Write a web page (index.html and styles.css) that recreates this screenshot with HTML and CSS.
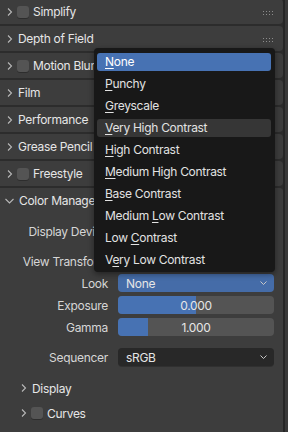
FILE: index.html
```html
<!DOCTYPE html>
<html>
<head>
    <link rel="stylesheet" href="styles.css">
</head>
<body>
    <div class="editor">
        <div class="panels">
            <div class="panel-head first">
                <svg class="chev" width="6" height="8" viewBox="0 0 6 8"><path d="M1 0.5 L4.5 4 L1 7.5" /></svg>
                <span class="check"></span>
                <span class="title">Simplify</span>
                <svg class="grip" width="10" height="4" viewBox="0 0 10 4"><g><rect x="0" y="0" width="1" height="1"/><rect x="3" y="0" width="1" height="1"/><rect x="6" y="0" width="1" height="1"/><rect x="9" y="0" width="1" height="1"/><rect x="0" y="3" width="1" height="1"/><rect x="3" y="3" width="1" height="1"/><rect x="6" y="3" width="1" height="1"/><rect x="9" y="3" width="1" height="1"/></g></svg>
            </div>
            <div class="panel-head">
                <svg class="chev" width="6" height="8" viewBox="0 0 6 8"><path d="M1 0.5 L4.5 4 L1 7.5" /></svg>
                <span class="title">Depth of Field</span>
                <svg class="grip" width="10" height="4" viewBox="0 0 10 4"><g><rect x="0" y="0" width="1" height="1"/><rect x="3" y="0" width="1" height="1"/><rect x="6" y="0" width="1" height="1"/><rect x="9" y="0" width="1" height="1"/><rect x="0" y="3" width="1" height="1"/><rect x="3" y="3" width="1" height="1"/><rect x="6" y="3" width="1" height="1"/><rect x="9" y="3" width="1" height="1"/></g></svg>
            </div>
            <div class="panel-head">
                <svg class="chev" width="6" height="8" viewBox="0 0 6 8"><path d="M1 0.5 L4.5 4 L1 7.5" /></svg>
                <span class="check"></span>
                <span class="title">Motion Blur</span>
            </div>
            <div class="panel-head">
                <svg class="chev" width="6" height="8" viewBox="0 0 6 8"><path d="M1 0.5 L4.5 4 L1 7.5" /></svg>
                <span class="title">Film</span>
            </div>
            <div class="panel-head">
                <svg class="chev" width="6" height="8" viewBox="0 0 6 8"><path d="M1 0.5 L4.5 4 L1 7.5" /></svg>
                <span class="title">Performance</span>
            </div>
            <div class="panel-head">
                <svg class="chev" width="6" height="8" viewBox="0 0 6 8"><path d="M1 0.5 L4.5 4 L1 7.5" /></svg>
                <span class="title">Grease Pencil</span>
            </div>
            <div class="panel-head">
                <svg class="chev" width="6" height="8" viewBox="0 0 6 8"><path d="M1 0.5 L4.5 4 L1 7.5" /></svg>
                <span class="check"></span>
                <span class="title">Freestyle</span>
            </div>

            <div class="panel open">
                <div class="panel-head">
                    <svg class="chev down" width="9" height="6" viewBox="0 0 9 6"><path d="M0.5 1 L4.5 5 L8.5 1" /></svg>
                    <span class="title">Color Management</span>
                </div>
                <div class="panel-body">
                    <div class="prop">
                        <span class="label">Display Device</span>
                        <div class="field menu-field"><span>sRGB</span></div>
                    </div>
                    <div class="prop group">
                        <span class="label">View Transform</span>
                        <div class="field menu-field"><span>AgX</span></div>
                    </div>
                    <div class="prop">
                        <span class="label">Look</span>
                        <div class="field menu-field active">
                            <span>None</span>
                            <svg class="drop" width="7" height="4" viewBox="0 0 7 4"><path d="M0.5 0.5 L3.5 3.5 L6.5 0.5" /></svg>
                        </div>
                    </div>
                    <div class="prop">
                        <span class="label">Exposure</span>
                        <div class="field slider">
                            <div class="fill" style="width: 50%"></div>
                            <span class="value">0.000</span>
                        </div>
                    </div>
                    <div class="prop">
                        <span class="label">Gamma</span>
                        <div class="field slider">
                            <div class="fill" style="width: 19%"></div>
                            <span class="value">1.000</span>
                        </div>
                    </div>
                    <div class="prop group">
                        <span class="label">Sequencer</span>
                        <div class="field menu-field dark">
                            <span>sRGB</span>
                            <svg class="drop" width="7" height="4" viewBox="0 0 7 4"><path d="M0.5 0.5 L3.5 3.5 L6.5 0.5" /></svg>
                        </div>
                    </div>

                    <div class="sub-head first-sub">
                        <svg class="chev" width="6" height="8" viewBox="0 0 6 8"><path d="M1 0.5 L4.5 4 L1 7.5" /></svg>
                        <span class="title">Display</span>
                    </div>
                    <div class="sub-head">
                        <svg class="chev" width="6" height="8" viewBox="0 0 6 8"><path d="M1 0.5 L4.5 4 L1 7.5" /></svg>
                        <span class="check"></span>
                        <span class="title">Curves</span>
                    </div>
                </div>
            </div>
        </div>
        <div class="scrollbar"></div>
    </div>

    <div class="popup">
        <div class="item selected"><u>N</u>one</div>
        <div class="item"><u>P</u>unchy</div>
        <div class="item"><u>G</u>reyscale</div>
        <div class="item hover"><u>V</u>ery High Contrast</div>
        <div class="item"><u>H</u>igh Contrast</div>
        <div class="item"><u>M</u>edium High Contrast</div>
        <div class="item"><u>B</u>ase Contrast</div>
        <div class="item">Medium <u>L</u>ow Contrast</div>
        <div class="item">Low <u>C</u>ontrast</div>
        <div class="item">V<u>e</u>ry Low Contrast</div>
    </div>
</body>
</html>
```

FILE: styles.css
```css
:root {
    --region: #2c2c2c;
    --panel: #3d3d3d;
    --text: #e6e6e6;
    --label: #d6d6d6;
    --icon: #b8b8b8;
    --blue: #4772b3;
    --blue-dim: #456ca8;
    --slider: #545454;
    --menu: #181818;
}

* {
    margin: 0;
    padding: 0;
    box-sizing: border-box;
}

body {
    width: 288px;
    height: 432px;
    overflow: hidden;
    background: var(--region);
    font-family: Inter, "DejaVu Sans", sans-serif;
    font-size: 12px;
    letter-spacing: -0.3px;
    color: var(--text);
    position: relative;
}

.editor {
    display: flex;
    height: 432px;
}

.panels {
    width: 283px;
    display: flex;
    flex-direction: column;
    gap: 2px;
    margin-top: -1px;
}

.scrollbar {
    width: 5px;
    border-left: 2px solid #262626;
    background: #393939;
}

.panel-head {
    height: 25px;
    flex-shrink: 0;
    background: var(--panel);
    border-radius: 0 4px 4px 0;
    display: flex;
    align-items: center;
    padding-left: 7px;
    position: relative;
}

.chev {
    fill: none;
    stroke: var(--icon);
    stroke-width: 1.1;
    flex-shrink: 0;
}

.chev.down {
    margin-left: -2px;
}

.check {
    width: 12px;
    height: 12px;
    border-radius: 3px;
    background: #545454;
    box-shadow: 0 1px 0 rgba(0, 0, 0, 0.25);
    margin-left: 4px;
    flex-shrink: 0;
}

.title {
    margin-left: 5px;
    white-space: nowrap;
}

.check + .title {
    margin-left: 4px;
}

.grip {
    position: absolute;
    left: 263px;
    top: 12px;
    fill: #8c8c8c;
}

.panel.open {
    flex: 1 0 auto;
    background: var(--panel);
    border-radius: 0 4px 0 0;
}

.panel-body {
    padding: 9px 9px 0 0;
}

.prop {
    display: grid;
    grid-template-columns: 108px 156px;
    column-gap: 10px;
    align-items: center;
    height: 18px;
    margin-bottom: 4px;
}

.prop.group {
    margin-top: 12px;
}

.label {
    text-align: right;
    color: var(--label);
    white-space: nowrap;
}

.field {
    height: 18px;
    border-radius: 4px;
    background: var(--slider);
    position: relative;
    overflow: hidden;
    display: flex;
    align-items: center;
}

.menu-field {
    padding: 0 7px 0 8px;
    justify-content: space-between;
}

.menu-field.active {
    background: var(--blue-dim);
}

.menu-field.dark {
    background: #282828;
    box-shadow: 0 1px 0 rgba(0, 0, 0, 0.2);
}

.drop {
    fill: none;
    stroke: #c8c8c8;
    stroke-width: 1;
}

.slider {
    justify-content: center;
}

.slider .fill {
    position: absolute;
    left: 0;
    top: 0;
    bottom: 0;
    background: var(--blue);
}

.slider .value {
    position: relative;
}

.sub-head {
    display: flex;
    align-items: center;
    height: 22px;
    padding-left: 21px;
    margin-top: 3px;
}

.sub-head.first-sub {
    margin-top: 11px;
}

.popup {
    position: absolute;
    left: 94px;
    top: 48px;
    width: 181px;
    height: 224px;
    background: var(--menu);
    border-radius: 4px;
    box-shadow: 0 2px 6px rgba(0, 0, 0, 0.45);
    padding: 5px 4px 3px 3px;
    display: flex;
    flex-direction: column;
    gap: 4px;
}

.item {
    height: 18px;
    line-height: 18px;
    padding-left: 8px;
    border-radius: 3px;
    color: #e2e2e2;
    white-space: nowrap;
}

.item.selected {
    background: var(--blue);
    color: #fff;
}

.item.hover {
    background: #363636;
}

u {
    text-decoration-thickness: 1px;
    text-underline-offset: 2px;
}
```
